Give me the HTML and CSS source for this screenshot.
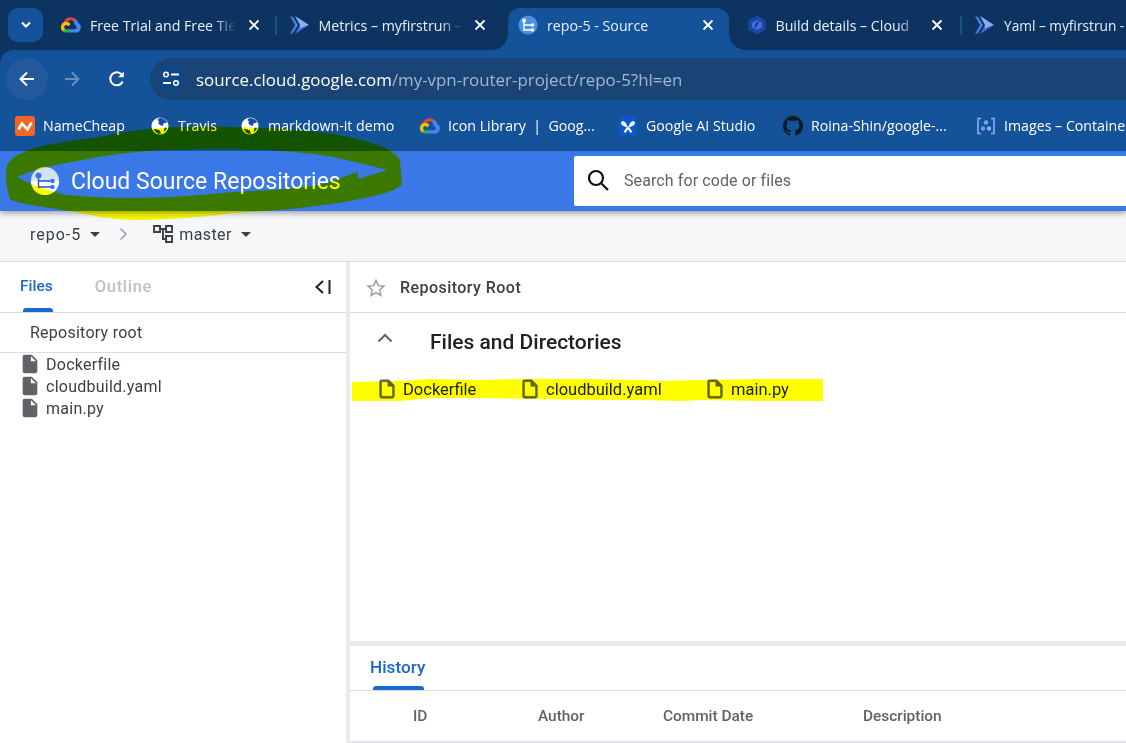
FILE: index.html
```html
<!DOCTYPE html>
<html lang="en">
<head>
<meta charset="utf-8">
<title>repo-5 - Source</title>
<link rel="stylesheet" href="styles.css">
</head>
<body>
<div class="page">
  <svg width="0" height="0" class="defs">
    <defs>
      <symbol id="gcloud" viewBox="0 0 24 20">
        <path d="M15.2 5.6l2-2 .1-.9A9 9 0 0 0 3 7.2l.7-.1 4-.7.3-.3a5 5 0 0 1 7.2-.5z" fill="#ea4335"/>
        <path d="M20.8 7.2a9 9 0 0 0-3.5-4.4l-2.8 2.8a5 5 0 0 1 1.8 4v.5a2.5 2.5 0 0 1 0 5h-5l-.5.5v3l.5.5h5a6.5 6.5 0 0 0 4.5-11.9z" fill="#4285f4"/>
        <path d="M6.300 19.100h5v-4h-5a2.500 2.500 0 0 1-1-.2l-.7.2-2 2-.2.7a6.500 6.500 0 0 0 3.900 1.300z" fill="#34a853"/>
        <path d="M6.300 6.100A6.500 6.500 0 0 0 2.400 17.800l2.900-2.900a2.500 2.500 0 1 1 3.300-3.300l2.900-2.900a6.500 6.500 0 0 0-5.200-2.600z" fill="#fbbc05"/>
      </symbol>
      <symbol id="run" viewBox="0 0 20 20">
        <path d="M0 1l5 9-5 9 3-1 5-8-5-8z" fill="#4b7fe8"/>
        <path d="M5 1l14 9L9 14l1-4-5-9z" fill="#8ab0f4"/>
        <path d="M9 14l10-4L5 19l5-9z" fill="#3f6fd8"/>
      </symbol>
      <symbol id="globe" viewBox="0 0 20 20">
        <circle cx="10" cy="10" r="9.500" fill="#fff"/>
        <path d="M10 1a9 9 0 0 1 8 5l-4 1-1 3-3-1-2-2 1-2-2-2a9 9 0 0 1 3-2zM3 13l4 1 3 1 1 4a9 9 0 0 1-8-6zM15 12l3 0a9 9 0 0 1-4 5z" fill="#174ea6"/>
      </symbol>
      <symbol id="file" viewBox="0 0 24 24">
        <path d="M6 2c-1.100 0-2 .9-2 2v16c0 1.100.9 2 2 2h12c1.100 0 2-.9 2-2V8l-6-6H6zm7 7V3.500L18.500 9H13z"/>
      </symbol>
      <symbol id="fileline" viewBox="0 0 24 24">
        <path d="M14 2H6c-1.100 0-2 .9-2 2v16c0 1.100.9 2 2 2h12c1.100 0 2-.9 2-2V8l-6-6zM6 20V4h7v5h5v11H6z"/>
      </symbol>
      <symbol id="close" viewBox="0 0 12 12">
        <path d="M1.500 1.500l9 9M10.500 1.500l-9 9" stroke="#fff" stroke-width="1.800" fill="none"/>
      </symbol>
    </defs>
  </svg>

  <div class="tabstrip">
    <div class="tabmenu">
      <svg width="12" height="8" viewBox="0 0 12 8"><path d="M2 1.500l4 4 4-4" stroke="#fff" stroke-width="2" fill="none"/></svg>
    </div>
    <div class="tab">
      <svg class="tabicon"><use href="#gcloud"/></svg>
      <span class="tabtitle">Free Trial and Free Tie</span>
      <svg class="tabclose"><use href="#close"/></svg>
      <i class="tabsep"></i>
    </div>
    <div class="tab">
      <svg class="tabicon"><use href="#run"/></svg>
      <span class="tabtitle">Metrics – myfirstrun –</span>
      <svg class="tabclose"><use href="#close"/></svg>
    </div>
    <div class="tab active">
      <svg class="tabicon" viewBox="0 0 20 20">
        <circle cx="10" cy="10" r="9.500" fill="#4a90e2"/>
        <path d="M6 5v10h9M6 10h9" stroke="#fff" stroke-width="1.400" fill="none"/>
        <circle cx="6" cy="5.500" r="2" fill="#fff"/><circle cx="14.500" cy="10" r="1.800" fill="#fff"/><circle cx="14.500" cy="15" r="1.800" fill="#fff"/>
      </svg>
      <span class="tabtitle">repo-5 - Source</span>
      <svg class="tabclose"><use href="#close"/></svg>
    </div>
    <div class="tab">
      <svg class="tabicon" viewBox="0 0 20 20">
        <path d="M10 .5l8.500 4.700v9.600L10 19.500l-8.500-4.700V5.200z" fill="#1a46a8"/>
        <path d="M10 5l5 2.800v4.400L10 15l-5-2.800V7.800z" fill="#3f6fd8"/>
        <path d="M8 12l3-5" stroke="#0f2f7a" stroke-width="1.600"/>
      </svg>
      <span class="tabtitle">Build details – Cloud</span>
      <svg class="tabclose"><use href="#close"/></svg>
      <i class="tabsep"></i>
    </div>
    <div class="tab last">
      <svg class="tabicon"><use href="#run"/></svg>
      <span>Yaml – myfirstrun -</span>
    </div>
  </div>

  <div class="toolbar">
    <div class="navbtn back">
      <svg width="20" height="20" viewBox="0 0 20 20"><path d="M17 10H4M10 3.500L3.500 10l6.500 6.500" stroke="#fff" stroke-width="2" fill="none"/></svg>
    </div>
    <div class="navbtn">
      <svg width="20" height="20" viewBox="0 0 20 20"><path d="M3 10h13M10 3.500l6.500 6.500-6.500 6.500" stroke="#6c8fb8" stroke-width="2" fill="none"/></svg>
    </div>
    <div class="navbtn">
      <svg width="20" height="20" viewBox="0 0 20 20"><path d="M15.700 12.500a6.500 6.500 0 1 1-.9-6.800" stroke="#fff" stroke-width="2" fill="none"/><path d="M16.800 2.500v5.700h-5.700z" fill="#fff"/></svg>
    </div>
    <div class="omnibox">
      <div class="siteinfo">
        <svg width="18" height="16" viewBox="0 0 18 16"><circle cx="4" cy="3.500" r="2.300" stroke="#fff" stroke-width="1.500" fill="none"/><path d="M9 3.500h8M1 12h8" stroke="#fff" stroke-width="1.800"/><circle cx="14" cy="12" r="2.300" stroke="#fff" stroke-width="1.500" fill="none"/></svg>
      </div>
      <span class="url">source.cloud.google.com<span class="urlpath">/my-vpn-router-project/repo-5?hl=en</span></span>
    </div>
  </div>

  <div class="bookmarks">
    <div class="bm">
      <svg class="bmicon" viewBox="0 0 20 20"><rect width="20" height="20" rx="3" fill="#f26522"/><path d="M3.500 13.500l3.500-6 5.500 6 4-7" stroke="#fff" stroke-width="2.600" fill="none"/></svg>
      <span>NameCheap</span>
    </div>
    <div class="bm small"><svg class="bmicon"><use href="#globe"/></svg><span>Travis</span></div>
    <div class="bm small"><svg class="bmicon"><use href="#globe"/></svg><span>markdown-it demo</span></div>
    <div class="bm"><svg class="bmicon"><use href="#gcloud"/></svg><span>Icon Library  |  Goog...</span></div>
    <div class="bm small">
      <svg class="bmicon" viewBox="0 0 20 20"><rect width="20" height="20" rx="2" fill="#0b57d0"/><path d="M10 12C8 6 5 3 3 5s0 5 7 7zM10 12c2-6 5-9 7-7s0 5-7 7z" fill="#fff"/><path d="M10 12c-2 2-3 4-4 5M10 12c2 2 3 4 4 5" stroke="#fff" stroke-width="2.400"/></svg>
      <span>Google AI Studio</span>
    </div>
    <div class="bm">
      <svg class="bmicon" viewBox="0 0 16 16"><path fill="#111a24" d="M8 0C3.580 0 0 3.580 0 8c0 3.540 2.290 6.530 5.470 7.590.4.070.55-.17.55-.38 0-.19-.01-.82-.01-1.490-2.010.37-2.530-.49-2.690-.94-.09-.23-.48-.94-.82-1.130-.28-.15-.68-.52-.01-.53.63-.01 1.080.58 1.230.82.720 1.210 1.870.870 2.330.660.070-.520.280-.870.510-1.070-1.780-.2-3.640-.890-3.640-3.950 0-.870.310-1.590.820-2.150-.080-.2-.360-1.020.080-2.120 0 0 .670-.210 2.200.820.640-.180 1.320-.270 2-.270s1.360.090 2 .270c1.530-1.040 2.200-.820 2.200-.820.440 1.100.160 1.920.080 2.120.510.560.820 1.270.820 2.150 0 3.070-1.870 3.750-3.650 3.950.290.250.540.730.540 1.480 0 1.070-.010 1.930-.010 2.200 0 .210.150.460.550.380A8.010 8.010 0 0 0 16 8c0-4.420-3.580-8-8-8z"/></svg>
      <span>Roina-Shin/google-...</span>
    </div>
    <div class="bm">
      <svg class="bmicon" viewBox="0 0 20 20"><path d="M5 2.500H2v15h3M15 2.500h3v15h-3" stroke="#8ab0f4" stroke-width="1.600" fill="none"/><circle cx="10" cy="6.500" r="2.200" fill="#7aa5f0"/><circle cx="7" cy="12.500" r="2.200" fill="#6d9aec"/><circle cx="13" cy="12.500" r="2.200" fill="#8ab0f4"/></svg>
      <span>Images – Containe</span>
    </div>
  </div>

  <header class="appbar">
    <div class="brand">
      <svg width="28" height="28" viewBox="0 0 28 28">
        <circle cx="14" cy="14" r="14" fill="#d2e3fc"/>
        <path d="M0 14a14 14 0 0 0 28 0z" fill="#fff"/>
        <path d="M7.500 9v11h14.500M7.500 14h14" stroke="#1a56c4" stroke-width="1.400" fill="none"/>
        <circle cx="7.500" cy="8.500" r="3" fill="#3b78e7"/><circle cx="21.500" cy="14" r="2.300" fill="#3b78e7"/><circle cx="21.500" cy="20" r="2.300" fill="#3b78e7"/>
      </svg>
      <span class="brandname">Cloud Source Repositories</span>
    </div>
    <div class="search">
      <svg width="24" height="24" viewBox="0 0 24 24"><circle cx="10" cy="10" r="7" stroke="#111" stroke-width="2.200" fill="none"/><path d="M15 15l7 7" stroke="#111" stroke-width="2.200"/></svg>
      <span>Search for code or files</span>
    </div>
  </header>

  <nav class="crumbs">
    <span class="repo">repo-5</span>
    <i class="caret"></i>
    <svg class="crumbsep" width="9" height="14" viewBox="0 0 9 14"><path d="M1.500 1.500L7 7l-5.500 5.500" stroke="#9aa0a6" stroke-width="1.600" fill="none"/></svg>
    <svg class="branch" width="20" height="18" viewBox="0 0 20 18"><path d="M1 1h6v6H1zM13 1h6v6h-6zM13 11h6v6h-6zM7 4h6M10 4v10h3" stroke="#3c4043" stroke-width="1.900" fill="none"/></svg>
    <span>master</span>
    <i class="caret"></i>
  </nav>

  <main class="workspace">
    <aside class="side">
      <div class="sidetabs">
        <span class="stab on">Files</span>
        <span class="stab off">Outline</span>
        <svg class="collapse" width="18" height="16" viewBox="0 0 18 16"><path d="M9 2L2.500 8 9 14" stroke="#202124" stroke-width="2" fill="none"/><path d="M15.500 1v14" stroke="#202124" stroke-width="2"/></svg>
      </div>
      <div class="rootrow">Repository root</div>
      <ul class="tree">
        <li><svg class="fi"><use href="#file"/></svg>Dockerfile</li>
        <li><svg class="fi"><use href="#file"/></svg>cloudbuild.yaml</li>
        <li><svg class="fi"><use href="#file"/></svg>main.py</li>
      </ul>
    </aside>

    <section class="content">
      <div class="rootbar">
        <svg width="20" height="20" viewBox="0 0 24 24"><path d="M12 3l2.700 6.200 6.800.6-5.100 4.500 1.500 6.600L12 17.400l-5.900 3.500 1.500-6.600-5.100-4.500 6.800-.6z" stroke="#9aa0a6" stroke-width="1.800" fill="none"/></svg>
        <span>Repository Root</span>
      </div>
      <div class="filescard">
        <div class="cardhead">
          <svg width="18" height="12" viewBox="0 0 18 12"><path d="M2.500 9.500L9 3l6.500 6.500" stroke="#5f6368" stroke-width="2" fill="none"/></svg>
          <h2>Files and Directories</h2>
        </div>
        <div class="filegrid">
          <div class="fileitem"><svg class="fi line"><use href="#fileline"/></svg>Dockerfile</div>
          <div class="fileitem"><svg class="fi line"><use href="#fileline"/></svg>cloudbuild.yaml</div>
          <div class="fileitem"><svg class="fi line"><use href="#fileline"/></svg>main.py</div>
        </div>
      </div>
      <div class="history">
        <div class="histtab"><span>History</span></div>
        <div class="histhead">
          <span>ID</span><span>Author</span><span>Commit Date</span><span>Description</span>
        </div>
      </div>
    </section>
  </main>

  <svg class="ink" width="1126" height="743" viewBox="0 0 1126 743">
    <path fill-rule="evenodd" d="M7 166 C12 150 50 143 100 137 C125 131 150 128 180 127 C230 126 280 128 320 132 C360 138 392 146 400 160 L402 184 C396 192 375 196 350 201 C310 208 270 211 232 213 C205 217 165 220 133 220 C110 219 92 216 75 212 C45 207 18 204 10 199 C6 188 5 176 7 166 Z
      M17 177 C28 172 48 166 67 163 C100 156 135 151 167 150 C200 149 240 149 267 150 C295 152 318 154 333 157 C352 161 372 166 387 170 C378 173 368 176 358 179 L358 172 C345 176 332 182 320 185 C290 189 260 191 233 192 C200 195 165 198 133 198 C110 198 88 197 67 195 C50 192 32 185 17 177 Z"/>
    <path d="M352 382 L400 381 L430 379 L480 380 L522 379 L590 379 L640 380 L660 381 L700 380 L760 379 L823 379 L823 401 L760 401 L700 400 L680 401 L640 400 L590 400 L540 399 L480 398 L430 398 L400 401 L352 401 Z"/>
  </svg>
</div>
</body>
</html>
```
FILE: styles.css
```css
* { box-sizing: border-box; }
html, body { margin: 0; padding: 0; }
body { background: #fff; overflow: hidden; font-family: Roboto, sans-serif; color: #202124; }
.page { position: relative; width: 1126px; height: 743px; overflow: hidden; display: flex; flex-direction: column; background: #0d3461; }
.defs { position: absolute; }

/* browser chrome */
.tabstrip { flex: 0 0 50px; display: flex; align-items: flex-end; background: #0d3461; padding-left: 8px; font: 14.200px "Open Sans", sans-serif; color: #e8f0fe; }
.tabmenu { flex: 0 0 35px; height: 34px; margin: 0 8px 8px 0; border-radius: 10px; background: #14539a; display: flex; align-items: center; justify-content: center; }
.tab { position: relative; flex: 0 0 228.5px; height: 42px; display: flex; align-items: center; padding: 0 0 8px 10px; white-space: nowrap; }
.tab.last { flex-basis: 161px; font-size: 13.700px; }
.tab.active { flex-basis: 220.5px; margin-right: 8px; background: #14539a; border-radius: 12px 12px 0 0; }
.tab.active::before, .tab.active::after { content: ""; position: absolute; bottom: 0; width: 16px; height: 16px; }
.tab.active::before { left: -16px; background: radial-gradient(circle at 0 0, transparent 15.500px, #14539a 16px); }
.tab.active::after { right: -16px; background: radial-gradient(circle at 100% 0, transparent 15.500px, #14539a 16px); }
.tabicon { flex: 0 0 20px; width: 20px; height: 20px; margin-right: 9px; }
.tabtitle { flex: 0 0 143px; -webkit-mask-image: linear-gradient(to right, #000 85%, transparent 100%); mask-image: linear-gradient(to right, #000 85%, transparent 100%); }
.tabclose { width: 12px; height: 12px; margin-left: 12px; }
.tabsep { position: absolute; right: 3px; top: 8px; width: 2px; height: 19px; background: #1a4f8e; }

.toolbar { flex: 0 0 50px; display: flex; align-items: flex-end; background: #14539a; border-top-left-radius: 14px; padding-left: 6px; }
.navbtn { flex: 0 0 42px; height: 42px; display: flex; align-items: center; justify-content: center; border-radius: 50%; margin-right: 3px; }
.navbtn.back { background: #22599c; }
.omnibox { flex: 1; height: 42px; margin-left: 9px; display: flex; align-items: center; background: #1b4476; border-radius: 21px 0 0 21px; padding-left: 6px; }
.siteinfo { flex: 0 0 30px; height: 30px; border-radius: 50%; background: #124584; display: flex; align-items: center; justify-content: center; margin-right: 10px; }
.url { font: 16.900px "Open Sans", sans-serif; color: #fff; white-space: nowrap; }
.urlpath { color: #a3b6cf; }

.bookmarks { flex: 0 0 51px; display: grid; grid-template-columns: 136px 90px 179px 199px 164px 193px 1fr; align-items: center; background: #14539a; padding-left: 15px; font: 14.200px "Open Sans", sans-serif; color: #fff; white-space: pre; }
.bm { display: flex; align-items: center; gap: 8px; }
.bmicon { flex: 0 0 20px; width: 20px; height: 20px; }
.bm.small { gap: 9px; }
.bm.small .bmicon { flex-basis: 18px; width: 18px; height: 18px; }

/* app */
.appbar { position: relative; z-index: 2; flex: 0 0 60px; display: flex; align-items: center; background: #3b78e7; box-shadow: 0 2px 6px rgba(60, 64, 67, .5); }
.brand { flex: 0 0 574px; display: flex; align-items: center; gap: 12px; padding-left: 31px; }
.brandname { color: #fff; font-size: 23px; white-space: nowrap; margin-top: 1px; }
.search { flex: 1; height: 50px; display: flex; align-items: center; gap: 14px; background: #fff; border-radius: 2px 0 0 2px; padding: 0 0 2px 12px; color: #5f6368; font-size: 16px; letter-spacing: .1px; }

.crumbs { flex: 0 0 51px; display: flex; align-items: center; padding: 0 0 4px 30px; background: #f6f7f9; border-bottom: 1px solid #dadce0; font-size: 16px; color: #3c4043; letter-spacing: .4px; }
.repo { letter-spacing: 1px; }
.caret { width: 0; height: 0; margin-left: 9px; border: 5px solid transparent; border-top-color: #3c4043; border-bottom: 0; }
.crumbsep { margin: 0 25px 0 19px; }
.branch { margin-right: 6px; }

.workspace { flex: 1; display: flex; min-height: 0; background: #e8eaed; }
.side { flex: 0 0 346px; background: #fff; font-size: 16px; color: #3c4043; letter-spacing: .25px; }
.sidetabs { position: relative; height: 51px; display: flex; align-items: center; gap: 42px; padding: 0 0 2px 20px; border-bottom: 1px solid #dadce0; font-weight: 500; letter-spacing: 0; }
.stab.on { color: #1967d2; font-size: 15.500px; }
.stab.on::after { content: ""; position: absolute; left: 23px; bottom: 0; width: 30px; height: 4px; background: #1967d2; border-radius: 3px 3px 0 0; }
.stab.off { color: #bdc1c6; font-size: 16.500px; letter-spacing: .7px; }
.collapse { position: absolute; right: 14px; top: 17px; }
.rootrow { height: 40px; line-height: 39px; padding-left: 30px; border-bottom: 1px solid #dadce0; }
.tree { list-style: none; margin: 0; padding: 0; }
.tree li { height: 22px; display: flex; align-items: center; gap: 5px; padding-left: 19px; }
.fi { flex: 0 0 22px; width: 22px; height: 22px; fill: #5f6368; }
.fi.line { stroke: #5f6368; stroke-width: .6px; }

.content { flex: 1; margin-left: 4px; display: flex; flex-direction: column; background: #fff; min-width: 0; }
.rootbar { flex: 0 0 51px; display: flex; align-items: center; gap: 14px; padding: 1px 0 0 16px; border-bottom: 1px solid #dadce0; font-size: 16px; font-weight: 500; letter-spacing: .45px; color: #3c4043; }
.filescard { flex: 1; }
.cardhead { display: flex; align-items: center; height: 58px; padding: 0 0 0 26px; }
.cardhead svg { margin-top: -8px; }
.cardhead h2 { margin: 0 0 0 36px; font-size: 21px; font-weight: 500; color: #202124; }
.filegrid { display: grid; grid-template-columns: 143px 185px 1fr; margin-top: 7px; padding-left: 26px; font-size: 16.500px; }
.fileitem { display: flex; align-items: center; gap: 5px; height: 22px; }

.history { flex: 0 0 102px; border-top: 5px solid #e8eaed; border-bottom: 2px solid #e0e2e6; }
.histtab { position: relative; height: 45px; padding: 11px 0 0 20px; border-bottom: 1px solid #dadce0; color: #1967d2; font-size: 17.200px; font-weight: 500; }
.histtab::after { content: ""; position: absolute; left: 23px; bottom: 0; width: 51px; height: 4px; background: #1967d2; border-radius: 3px 3px 0 0; }
.histhead { display: grid; grid-template-columns: 125px 125px 200px 1fr; height: 50px; align-items: center; padding-left: 63px; font-size: 15.400px; font-weight: 500; color: #5f6368; }

/* highlighter marks drawn on top of the screenshot */
.ink { position: absolute; left: 0; top: 0; z-index: 5; fill: #ffff00; mix-blend-mode: multiply; pointer-events: none; }
```
